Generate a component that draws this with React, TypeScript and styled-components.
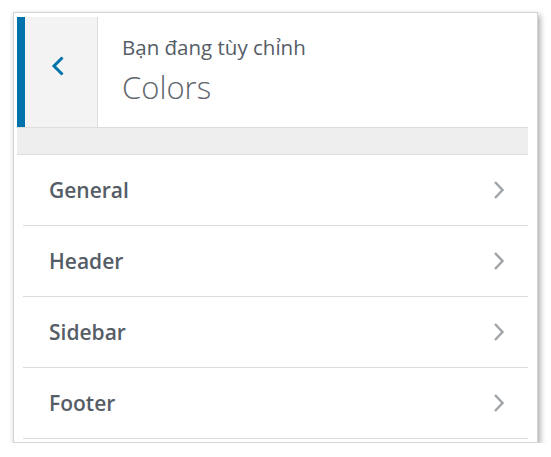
import React from 'react';
import styled, { createGlobalStyle } from 'styled-components';

const GlobalStyle = createGlobalStyle`
  html, body {
    margin: 0;
    padding: 0;
    background: #ffffff;
  }
  body {
    font-family: 'Open Sans', 'Noto Sans', sans-serif;
    color: #555d66;
  }
`;

const sections = ['General', 'Header', 'Sidebar', 'Footer'];

function App() {
  return (
    <>
      <GlobalStyle />
      <Frame>
        <Panel>
          <Header>
            <BackButton aria-label='Quay lại'>
              <svg width='16' height='22' viewBox='0 0 16 22'>
                <path d='M12.5 2.5 L4 11 L12.5 19.5' fill='none' stroke='#0073aa' strokeWidth='3' />
              </svg>
            </BackButton>
            <Titles>
              <Subtitle>Bạn đang tùy chỉnh</Subtitle>
              <Title>Colors</Title>
            </Titles>
          </Header>
          <Band />
          <List>
            {sections.map(function (name) {
              return (
                <Row key={name}>
                  <Label>{name}</Label>
                  <svg width='14' height='22' viewBox='0 0 14 22'>
                    <path d='M3 3 L10.5 11 L3 19' fill='none' stroke='#a0a5aa' strokeWidth='2.5' />
                  </svg>
                </Row>
              );
            })}
          </List>
        </Panel>
      </Frame>
    </>
  );
}

export default App;

const Frame = styled.div({
  boxSizing: 'border-box',
  margin: '12px 0 0 13px',
  width: 525,
  height: 431,
  padding: '4px 8px 3px 3px',
  border: '1px solid #d4d4d4',
  background: '#ffffff',
  boxShadow: '2px 3px 6px rgba(0, 0, 0, 0.35)',
});

const Panel = styled.div({
  display: 'flex',
  flexDirection: 'column',
  width: 511,
});

const Header = styled.div({
  display: 'flex',
  height: 111,
  borderBottom: '1px solid #dddddd',
  boxSizing: 'border-box',
});

const BackButton = styled.button({
  boxSizing: 'border-box',
  width: 81,
  height: '100%',
  display: 'flex',
  alignItems: 'center',
  justifyContent: 'center',
  padding: '0 7px 12px 0',
  background: '#f3f3f3',
  border: 'none',
  borderLeft: '8px solid #0073aa',
  borderRight: '1px solid #dddddd',
  cursor: 'pointer',
});

const Titles = styled.div({
  display: 'flex',
  flexDirection: 'column',
  paddingLeft: 24,
  paddingTop: 16,
});

const Subtitle = styled.span({
  fontSize: 20.5,
  lineHeight: '28px',
  color: '#555d66',
});

const Title = styled.span({
  marginTop: 6,
  fontSize: 31,
  fontWeight: 300,
  lineHeight: '40px',
  color: '#5f666d',
});

const Band = styled.div({
  height: 26,
  background: '#eeeeee',
  borderBottom: '1px solid #dddddd',
});

const List = styled.div({
  display: 'flex',
  flexDirection: 'column',
  paddingLeft: 6,
});

const Row = styled.div({
  boxSizing: 'border-box',
  height: 71,
  display: 'flex',
  alignItems: 'center',
  justifyContent: 'space-between',
  padding: '0 22px 0 26px',
  borderBottom: '1px solid #dddddd',
});

const Label = styled.span({
  fontSize: 21,
  fontWeight: 600,
  color: '#555d66',
});
